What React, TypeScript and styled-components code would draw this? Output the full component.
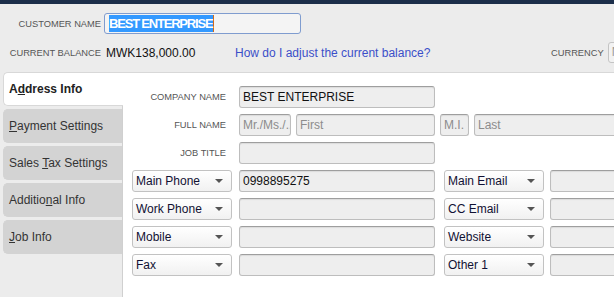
import React from "react";
import styled, { createGlobalStyle } from "styled-components";

const Global = createGlobalStyle`
  html, body { margin: 0; padding: 0; background: #ececec; overflow: hidden; }
  body { font-family: "Liberation Sans", Arial, sans-serif; }
  #root { width: 614px; height: 297px; overflow: hidden; }
`;

const Page = styled.div`
  width: 614px;
  height: 297px;
  overflow: hidden;
  background: #ececec;
  display: flex;
  flex-direction: column;
`;

const TopBar = styled.div`
  height: 4px;
  background: #1c2e4a;
  flex: none;
`;

const Header = styled.div`
  padding-top: 9px;
  display: flex;
  flex-direction: column;
  gap: 8px;
  flex: none;
`;

const HeaderRow = styled.div`
  display: flex;
  align-items: center;
  height: 21px;
  white-space: nowrap;
`;

const SmallLabel = styled.span<{ $w?: number }>`
  font-size: 9.3px;
  color: #555;
  text-transform: uppercase;
  text-align: right;
  ${(p) => (p.$w ? `width: ${p.$w}px;` : "")}
  flex: none;
`;

const NameInput = styled.div`
  margin-left: 3px;
  width: 197px;
  height: 21px;
  box-sizing: border-box;
  border: 1px solid #7f9ccf;
  border-radius: 3px;
  background: #f4f4f4;
  display: flex;
  align-items: center;
  padding-left: 4px;
`;

const Selected = styled.span`
  background: #3399ff;
  color: #fff;
  font-weight: bold;
  font-size: 13px;
  letter-spacing: -1.2px;
  line-height: 17px;
  padding-right: 1px;
  border-right: 1px solid #d06a1a;
`;

const Balance = styled.span`
  margin-left: 5px;
  width: 129px;
  font-size: 12px;
  color: #111;
  flex: none;
`;

const HelpLink = styled.a`
  width: 316px;
  font-size: 12px;
  color: #3b4fc9;
  text-decoration: none;
  flex: none;
`;

const CurrencyBox = styled.div`
  margin-left: 4px;
  width: 60px;
  height: 21px;
  box-sizing: border-box;
  border: 1px solid #c4c4c4;
  border-radius: 3px;
  background: #f2f2f2;
  font-size: 12px;
  color: #999;
  padding: 2px 0 0 3px;
  flex: none;
`;

const Main = styled.div`
  margin-top: 9px;
  display: flex;
  flex: 1;
  min-height: 0;
`;

const Tabs = styled.div`
  margin-left: 3px;
  width: 119px;
  display: flex;
  flex-direction: column;
  gap: 3px;
  flex: none;
  position: relative;
  z-index: 1;
`;

const Tab = styled.div<{ $active?: boolean }>`
  height: 34px;
  box-sizing: border-box;
  display: flex;
  align-items: center;
  padding-left: 5px;
  font-size: 12px;
  color: ${(p) => (p.$active ? "#222" : "#333")};
  font-weight: ${(p) => (p.$active ? "bold" : "normal")};
  background: ${(p) => (p.$active ? "#ffffff" : "#d3d3d3")};
  border-radius: 5px 0 0 5px;
  border: 1px solid ${(p) => (p.$active ? "#d8d8d8" : "#d3d3d3")};
  border-right: none;
  margin-right: ${(p) => (p.$active ? "-1px" : "0")};
  white-space: nowrap;
`;

const U = styled.span`
  text-decoration: underline;
`;

const Panel = styled.div`
  flex: 1;
  background: #ffffff;
  border-top: 1px solid #d8d8d8;
  border-left: 1px solid #d0d0d0;
  padding: 13px 0 0 9px;
  display: flex;
  flex-direction: column;
  gap: 6px;
  overflow: hidden;
`;

const Row = styled.div`
  display: flex;
  align-items: center;
  height: 22px;
  white-space: nowrap;
`;

const FieldLabel = styled.span`
  width: 100px;
  box-sizing: border-box;
  padding-right: 6px;
  text-align: right;
  font-size: 9.3px;
  color: #555;
  text-transform: uppercase;
  flex: none;
`;

const Input = styled.div<{ $w: number; $ml?: number; $placeholder?: boolean }>`
  width: ${(p) => p.$w}px;
  margin-left: ${(p) => p.$ml ?? 0}px;
  height: 22px;
  box-sizing: border-box;
  border: 1px solid #bdbdbd;
  border-top-color: #9e9e9e;
  border-radius: 3px;
  background: #eeeeee;
  box-shadow: inset 0 1px 1px rgba(0, 0, 0, 0.08);
  font-size: 12px;
  color: ${(p) => (p.$placeholder ? "#8c8c8c" : "#111")};
  padding: 3px 0 0 3px;
  overflow: hidden;
  flex: none;
`;

const Select = styled.div<{ $ml?: number }>`
  width: 100px;
  margin-left: ${(p) => p.$ml ?? 0}px;
  height: 22px;
  box-sizing: border-box;
  border: 1px solid #c2c2c2;
  border-radius: 3px;
  background: linear-gradient(#ffffff, #f1f1f1);
  display: flex;
  align-items: center;
  justify-content: space-between;
  padding: 0 8px 0 3px;
  font-size: 12px;
  color: #111133;
  flex: none;
`;

const Caret = styled.span`
  width: 0;
  height: 0;
  border-left: 4px solid transparent;
  border-right: 4px solid transparent;
  border-top: 4px solid #555;
`;

const SelectField = ({ label, ml }: { label: string; ml?: number }) => (
  <Select $ml={ml}>
    <span>{label}</span>
    <Caret />
  </Select>
);

const contactRows: [string, string, string][] = [
  ["Main Phone", "0998895275", "Main Email"],
  ["Work Phone", "", "CC Email"],
  ["Mobile", "", "Website"],
  ["Fax", "", "Other 1"],
];

export default function App() {
  return (
    <Page>
      <Global />
      <TopBar />
      <Header>
        <HeaderRow>
          <SmallLabel $w={101}>Customer Name</SmallLabel>
          <NameInput>
            <Selected>BEST ENTERPRISE</Selected>
          </NameInput>
        </HeaderRow>
        <HeaderRow>
          <SmallLabel $w={101}>Current Balance</SmallLabel>
          <Balance>MWK138,000.00</Balance>
          <HelpLink href="#">How do I adjust the current balance?</HelpLink>
          <SmallLabel>Currency</SmallLabel>
          <CurrencyBox>N</CurrencyBox>
        </HeaderRow>
      </Header>
      <Main>
        <Tabs>
          <Tab $active>
            <span>
              A<U>d</U>dress Info
            </span>
          </Tab>
          <Tab>
            <span>
              <U>P</U>ayment Settings
            </span>
          </Tab>
          <Tab>
            <span>
              Sales <U>T</U>ax Settings
            </span>
          </Tab>
          <Tab>
            <span>
              Additio<U>n</U>al Info
            </span>
          </Tab>
          <Tab>
            <span>
              <U>J</U>ob Info
            </span>
          </Tab>
        </Tabs>
        <Panel>
          <Row>
            <FieldLabel>Company Name</FieldLabel>
            <Input $w={196} $ml={7}>BEST ENTERPRISE</Input>
          </Row>
          <Row>
            <FieldLabel>Full Name</FieldLabel>
            <Input $w={52} $ml={7} $placeholder>Mr./Ms./..</Input>
            <Input $w={139} $ml={5} $placeholder>First</Input>
            <Input $w={29} $ml={5} $placeholder>M.I.</Input>
            <Input $w={160} $ml={5} $placeholder>Last</Input>
          </Row>
          <Row>
            <FieldLabel>Job Title</FieldLabel>
            <Input $w={196} $ml={7} />
          </Row>
          {contactRows.map(([a, val, b]) => (
            <Row key={a}>
              <SelectField label={a} />
              <Input $w={196} $ml={7}>{val}</Input>
              <SelectField label={b} ml={9} />
              <Input $w={100} $ml={6} />
            </Row>
          ))}
        </Panel>
      </Main>
    </Page>
  );
}
